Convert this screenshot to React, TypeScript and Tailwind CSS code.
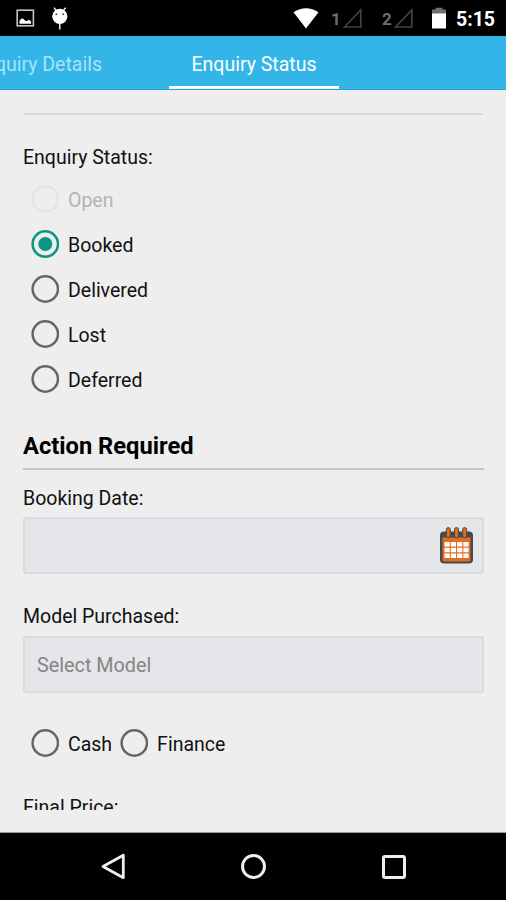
import clsx from 'clsx'

const STATUSES = [
  { label: 'Open', disabled: true },
  { label: 'Booked', checked: true },
  { label: 'Delivered' },
  { label: 'Lost' },
  { label: 'Deferred' },
]

type RadioProps = { label: string; checked?: boolean; disabled?: boolean }

function Radio({ label, checked, disabled }: RadioProps) {
  return (
    <div className="flex h-[45px] items-center">
      <svg
        className={clsx('size-7', checked ? 'text-[#0b9684]' : disabled ? 'text-[#e5e5e5]' : 'text-[#666]')}
        viewBox="0 0 28 28"
      >
        <circle cx="14.3" cy="14" r="12.7" fill="none" stroke="currentColor" strokeWidth="2.5" />
        {checked && <circle cx="14.3" cy="14" r="7" fill="currentColor" />}
      </svg>
      <span className={clsx('ml-[9px] pt-[5px]', disabled ? 'text-[#b4b4b4]' : 'text-[#111]')}>{label}</span>
    </div>
  )
}

function SignalIcon({ sim }: { sim: string }) {
  return (
    <div className="flex items-center">
      <span className="w-[11px] pt-[3px] text-[17px] font-bold leading-none text-[#6e6e6e]">{sim}</span>
      <svg className="size-5" viewBox="0 0 20 20" fill="none" stroke="#434343" strokeWidth="1.7">
        <path d="M2.5 19 18.8 2v17z" />
      </svg>
    </div>
  )
}

function StatusBar() {
  return (
    <div className="flex h-9 shrink-0 items-center bg-black pl-4 text-white">
      <svg className="h-[18px] w-[19px]" viewBox="0 0 19 18" fill="none">
        <rect x="1.2" y="1.2" width="16.2" height="15.6" stroke="#c4c4c4" strokeWidth="1.6" />
        <path d="M3.5 14.8v-3l1.8-2.2 2 .2 2 2 1.7.2 1.8-1.2 2.3 1.8v2.2z" fill="#fff" />
      </svg>
      <svg className="ml-4 h-[23px] w-[18px]" viewBox="0 0 18 23" fill="#fff">
        <circle cx="8.8" cy="9.3" r="7.6" />
        <path d="m3 .7 3 4M14.6.7l-3 4M8.8 16v6.5" stroke="#fff" strokeWidth="1.4" />
        <circle cx="5.4" cy="7.2" r="1" fill="#555" />
        <circle cx="12.2" cy="7.2" r="1" fill="#555" />
      </svg>
      <svg className="ml-[224px] h-[21px] w-[26px]" viewBox="0 0 26 21" fill="#fff">
        <path d="M.5 4.2Q13-3.8 25.5 4.2L13 20.6z" />
      </svg>
      <div className="ml-3 flex items-center gap-5">
        <SignalIcon sim="1" />
        <SignalIcon sim="2" />
      </div>
      <svg className="ml-[18px] h-[22px] w-4" viewBox="0 0 16 22">
        <path d="M1 2.5h3.5V.8h7v1.7H15V7H1z" fill="#707070" />
        <path d="M1 6.5h14V21.5H1z" fill="#fff" />
      </svg>
      <span className="ml-[9px] pt-[3px] text-[19.5px] font-bold leading-none">5:15</span>
    </div>
  )
}

function TabBar() {
  return (
    <div className="flex h-[54px] shrink-0 overflow-hidden border-b border-[#18a7df] bg-[#33b5e8] text-[19.5px] text-white">
      <div className="flex w-[169px] shrink-0 items-center justify-end pt-1 pr-[67px] whitespace-nowrap text-[#a9e2f8]">
        Enquiry Details
      </div>
      <div className="-mb-px flex h-[54px] w-[170px] items-center justify-center border-b-4 border-white pt-[7px]">
        Enquiry Status
      </div>
    </div>
  )
}

function CalendarIcon() {
  return (
    <svg className="h-[37px] w-[34px]" viewBox="0 0 34 37">
      <rect x="0" y="4.5" width="33" height="32" rx="4" fill="#434a4e" />
      <path d="M2.5 10.5h28v22a2 2 0 0 1-2 2h-24a2 2 0 0 1-2-2z" fill="#e46c20" />
      <g fill="#e46c20" stroke="#434a4e" strokeWidth="1">
        <rect x="6.3" y=".6" width="4" height="10" rx="2" />
        <rect x="14.5" y=".6" width="4" height="10" rx="2" />
        <rect x="22.7" y=".6" width="4" height="10" rx="2" />
      </g>
      <path
        d="M4.5 15h5.2v4.6H4.5zm6.3 0H16v4.6h-5.2zm6.3 0h5.2v4.6h-5.2zm6.3 0h5.2v4.6h-5.2zM4.5 20.7h5.2v4.6H4.5zm6.3 0H16v4.6h-5.2zm6.3 0h5.2v4.6h-5.2zm6.3 0h5.2v4.6h-5.2zM4.5 26.4h5.2V31H4.5zm6.3 0H16V31h-5.2zm6.3 0h5.2V31h-5.2zm6.3 0h5.2V31h-5.2z"
        fill="#fff"
      />
    </svg>
  )
}

function NavBar() {
  return (
    <div className="flex h-[67px] shrink-0 items-center bg-black pl-[100px]">
      <svg className="h-7 w-[26px]" viewBox="0 0 26 28" fill="none" stroke="#eee" strokeWidth="2.8">
        <path d="M23.3 2.3v22.4L3 13.5z" strokeLinejoin="round" />
      </svg>
      <span className="ml-[115px] size-[25px] rounded-full border-[3px] border-[#eee]" />
      <span className="ml-[116px] size-6 rounded-[3px] border-[3px] border-[#eee]" />
    </div>
  )
}

export default function App() {
  return (
    <div className="flex h-[900px] w-[506px] flex-col overflow-hidden bg-[#eee] font-['Roboto',sans-serif] text-[19.5px] leading-6 text-[#111]">
      <StatusBar />
      <TabBar />
      <main className="h-[720px] shrink-0 overflow-hidden pr-[22px] pl-[23px]">
        <div className="mx-px mt-[23px] h-0.5 bg-[#d8d8d8]" />
        <div className="mt-[31px]">Enquiry Status:</div>
        <div className="mt-1.5 pl-2">
          {STATUSES.map((s) => (
            <Radio key={s.label} {...s} />
          ))}
        </div>

        <h2 className="mt-[31px] text-[23.7px] font-bold leading-7 text-black">Action Required</h2>
        <div className="mt-2 h-0.5 bg-[#c6c6c6]" />

        <div className="mt-[17px]">Booking Date:</div>
        <div className="mt-1.5 flex h-[57px] items-center justify-end rounded-[3px] border-2 border-[#d9dbdd] bg-[#e4e6ea] pr-2">
          <CalendarIcon />
        </div>

        <div className="mt-[31px]">Model Purchased:</div>
        <div className="mt-[7px] flex h-[57px] items-center rounded-[3px] border-2 border-[#d9dbdd] bg-[#e4e6ea] pt-0.5 pl-3 text-[19.8px] text-[#858585]">
          Select Model
        </div>

        <div className="mt-[27px] flex gap-2 pl-2">
          <Radio label="Cash" />
          <Radio label="Finance" />
        </div>
        <div className="mt-[31px]">Final Price:</div>
      </main>
      <div className="h-[23px] shrink-0 border-b border-[#999]" />
      <NavBar />
    </div>
  )
}
